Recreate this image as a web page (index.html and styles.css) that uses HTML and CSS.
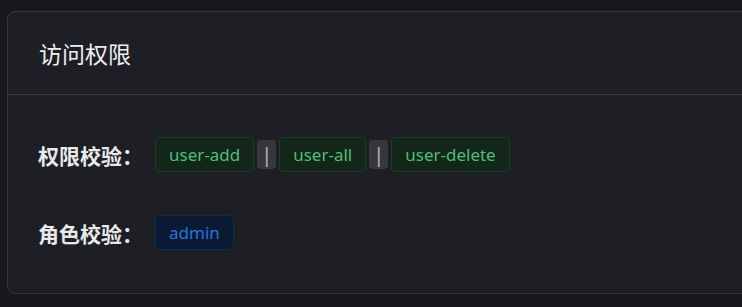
FILE: index.html
```html
<!DOCTYPE html>
<html lang="zh-CN">
<head>
    <meta charset="UTF-8">
    <meta name="viewport" content="width=device-width, initial-scale=1.0">
    <title>访问权限</title>
    <link rel="stylesheet" href="styles.css">
</head>
<body>
    <div class="card">
        <div class="card-header">访问权限</div>
        <div class="card-body">
            <div class="row">
                <span class="label">权限校验：</span>
                <div class="tags">
                    <span class="tag tag-success">user-add</span>
                    <span class="sep">|</span>
                    <span class="tag tag-success">user-all</span>
                    <span class="sep">|</span>
                    <span class="tag tag-success">user-delete</span>
                </div>
            </div>
            <div class="row">
                <span class="label">角色校验：</span>
                <div class="tags">
                    <span class="tag tag-primary">admin</span>
                </div>
            </div>
        </div>
    </div>
</body>
</html>
```

FILE: styles.css
```css
body {
    margin: 0;
    padding: 11px 0 0 7px;
    background-color: #17181c;
    font-family: "Noto Sans", "Noto Sans CJK SC", sans-serif;
    overflow: hidden;
}
.card {
    width: 760px;
    height: 283px;
    box-sizing: border-box;
    background-color: #1e1f24;
    border: 1px solid #36373c;
    border-radius: 8px;
    color: #e5e6e8;
}
.card-header {
    height: 83px;
    box-sizing: border-box;
    padding: 0 31px;
    display: flex;
    align-items: center;
    font-size: 23px;
    color: #eeeff1;
    border-bottom: 1px solid #36373c;
}
.card-body {
    padding: 42px 30px 0 30px;
    display: flex;
    flex-direction: column;
    gap: 43px;
}
.row {
    display: flex;
    align-items: center;
    height: 35px;
}
.label {
    width: 117px;
    font-size: 21px;
    font-weight: bold;
    color: #e8e9eb;
}
.tags {
    display: flex;
    align-items: center;
    gap: 3px;
}
.tag {
    height: 35px;
    box-sizing: border-box;
    display: flex;
    align-items: center;
    padding: 0 13px;
    font-size: 17px;
    border-radius: 4px;
    border: 1px solid;
}
.tag-success {
    background-color: #13261a;
    border-color: #1b3d26;
    color: #4fbd77;
}
.tag-primary {
    background-color: #0b1a33;
    border-color: #112a4e;
    color: #2773e0;
}
.sep {
    width: 19px;
    height: 29px;
    display: flex;
    align-items: center;
    justify-content: center;
    background-color: #36373c;
    border-radius: 4px;
    color: #b4b5b9;
    font-size: 20px;
}
```
